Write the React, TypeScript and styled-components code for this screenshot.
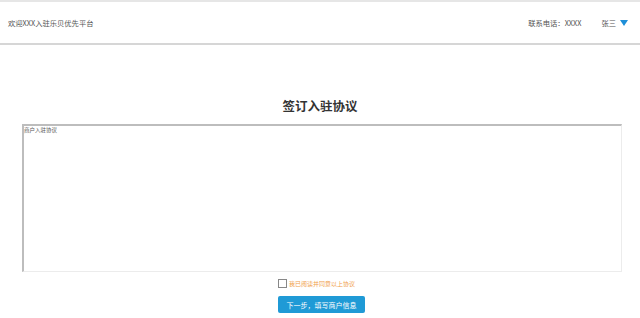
import styled, { createGlobalStyle } from "styled-components";

const GlobalStyle = createGlobalStyle`
  html, body {
    margin: 0;
    padding: 0;
    background: #fff;
    font-family: "Noto Sans CJK SC", "Liberation Sans", sans-serif;
  }
`;

const Header = styled.header`
  box-sizing: border-box;
  height: 45px;
  display: flex;
  align-items: center;
  padding: 0 12px 0 8px;
  border-top: 2px solid #e6e6e6;
  border-bottom: 2px solid #d6d6d6;
  color: #555;
  font-size: 7.3px;
`;

const Welcome = styled.div`
  flex: 1;
`;

const Contact = styled.div`
  margin-right: 20px;
`;

const User = styled.div`
  display: flex;
  align-items: center;
  gap: 4px;
`;

const Caret = styled.span`
  width: 0;
  height: 0;
  border-left: 4px solid transparent;
  border-right: 4px solid transparent;
  border-top: 6px solid #1e8fd8;
`;

const Main = styled.main`
  display: flex;
  flex-direction: column;
  align-items: center;
  padding-top: 52px;
`;

const Title = styled.h1`
  margin: 0;
  font-size: 12.5px;
  line-height: 18px;
  font-weight: 700;
  color: #333;
`;

const Agreement = styled.textarea`
  box-sizing: border-box;
  align-self: flex-start;
  margin: 9px 0 0 22px;
  width: 600px;
  height: 148px;
  padding: 0;
  resize: none;
  border-style: solid;
  border-width: 2px 1px 1px 2px;
  border-color: #bdbdbd #ececec #ececec #bdbdbd;
  font-family: "Noto Sans CJK SC", sans-serif;
  font-size: 5.5px;
  line-height: 8px;
  color: #555;
  outline: none;
`;

const Actions = styled.div`
  display: flex;
  flex-direction: column;
  align-items: flex-start;
  margin-top: 7px;
  margin-left: 3px;
`;

const CheckRow = styled.label`
  display: flex;
  align-items: center;
  gap: 2px;
  font-size: 6px;
  color: #f0a04b;
`;

const Box = styled.span`
  box-sizing: border-box;
  width: 9px;
  height: 9px;
  border: 1px solid #888;
  background: #fff;
`;

const NextButton = styled.button`
  margin-top: 8px;
  width: 87px;
  height: 17px;
  border: none;
  border-radius: 2px;
  background: #1f9ad6;
  color: #fff;
  font-family: "Noto Sans CJK SC", sans-serif;
  font-size: 7px;
  padding: 0;
`;

export default function App() {
  return (
    <>
      <GlobalStyle />
      <Header>
        <Welcome>欢迎XXX入驻乐贝优先平台</Welcome>
        <Contact>联系电话：XXXX</Contact>
        <User>
          张三
          <Caret />
        </User>
      </Header>
      <Main>
        <Title>签订入驻协议</Title>
        <Agreement defaultValue="商户入驻协议" readOnly />
        <Actions>
          <CheckRow>
            <Box />
            我已阅读并同意以上协议
          </CheckRow>
          <NextButton>下一步，填写商户信息</NextButton>
        </Actions>
      </Main>
    </>
  );
}
